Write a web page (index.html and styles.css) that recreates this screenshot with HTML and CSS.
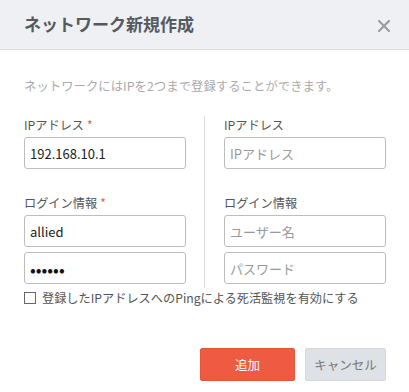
FILE: index.html
```html
<!DOCTYPE html>
<html lang="ja">
<head>
<meta charset="utf-8">
<link rel="stylesheet" href="styles.css">
</head>
<body>
<div class="dialog">
  <header class="dlg-header">
    <h1 class="dlg-title">ネットワーク新規作成</h1>
    <button class="dlg-close" aria-label="close">
      <svg width="12" height="12" viewBox="0 0 12 12"><path d="M1 1L11 11M11 1L1 11" stroke="#9a9ca3" stroke-width="2.2" stroke-linecap="square"/></svg>
    </button>
  </header>
  <div class="dlg-body">
    <p class="info">ネットワークにはIPを2つまで登録することができます。</p>
    <div class="cols">
      <div class="col">
        <label class="lbl">IPアドレス<span class="req">*</span></label>
        <input class="field" type="text" value="192.168.10.1">
        <label class="lbl lbl-gap">ログイン情報<span class="req">*</span></label>
        <input class="field" type="text" value="allied">
        <input class="field field-gap" type="password" value="aaaaaa">
      </div>
      <div class="divider"></div>
      <div class="col">
        <label class="lbl">IPアドレス</label>
        <input class="field" type="text" placeholder="IPアドレス">
        <label class="lbl lbl-gap">ログイン情報</label>
        <input class="field" type="text" placeholder="ユーザー名">
        <input class="field field-gap" type="text" placeholder="パスワード">
      </div>
    </div>
    <label class="check"><span class="box"></span>登録したIPアドレスへのPingによる死活監視を有効にする</label>
    <div class="actions">
      <button class="btn btn-primary">追加</button>
      <button class="btn btn-cancel">キャンセル</button>
    </div>
  </div>
</div>
</body>
</html>
```

FILE: styles.css
```css
* { box-sizing: border-box; }
html, body { margin: 0; padding: 0; background: #fff; }
body {
  font-family: "Noto Sans CJK JP", "Noto Sans", sans-serif;
  color: #555;
  width: 409px;
  height: 392px;
  overflow: hidden;
}
.dialog { width: 409px; }
.dlg-header {
  height: 50px;
  background: #eff0f4;
  border-bottom: 1px solid #dcdde2;
  display: flex;
  align-items: center;
  justify-content: space-between;
  padding: 0 18px 0 24px;
}
.dlg-title {
  margin: 0;
  font-size: 17px;
  font-weight: bold;
  color: #555a60;
  line-height: 20px;
  padding-bottom: 2px;
}
.dlg-close {
  border: 0;
  background: none;
  padding: 0;
  width: 14px;
  height: 14px;
  display: flex;
  align-items: center;
  justify-content: center;
  margin-top: 2px;
}
.dlg-body { padding: 26px 23px 0 24px; }
.info {
  margin: 0;
  font-size: 12.4px;
  line-height: 20px;
  color: #aaa;
}
.cols {
  display: flex;
  margin-top: 20px;
}
.col {
  width: 162px;
  display: flex;
  flex-direction: column;
  padding-bottom: 4px;
}
.divider {
  width: 1px;
  background: #dcdcdc;
  margin: 0 19px 0 18px;
}
.lbl {
  font-size: 12.2px;
  line-height: 18px;
  color: #555;
  margin-bottom: 3px;
}
.lbl-gap { margin-top: 25px; }
.req { color: #e8553e; margin-left: 3px; }
.field {
  width: 162px;
  height: 32px;
  border: 1px solid #bdbdbd;
  border-radius: 3px;
  padding: 0 5px;
  font-family: "Noto Sans CJK JP", "Noto Sans", sans-serif;
  font-size: 13px;
  color: #222;
  outline: none;
  background: #fff;
}
.field::placeholder { color: #999; }
.field[type="password"] { font-size: 17px; letter-spacing: 0; color: #111; }
.field-gap { margin-top: 5px; }
.check {
  display: flex;
  align-items: center;
  font-size: 12.2px;
  line-height: 20px;
  color: #555;
  margin-top: 0;
}
.box {
  width: 12px;
  height: 12px;
  border: 1px solid #666;
  margin-right: 6px;
  flex: none;
}
.actions {
  display: flex;
  justify-content: flex-end;
  gap: 10px;
  margin-top: 40px;
}
.btn {
  height: 33px;
  border-radius: 2px;
  font-family: "Noto Sans CJK JP", "Noto Sans", sans-serif;
  font-size: 12.5px;
  padding: 0;
}
.btn-primary {
  width: 95px;
  background: #ee5a42;
  border: 1px solid #e8533b;
  color: #fff;
}
.btn-cancel {
  width: 81px;
  background: #dee1e5;
  border: 1px solid #d4d7dc;
  color: #777;
}
```
